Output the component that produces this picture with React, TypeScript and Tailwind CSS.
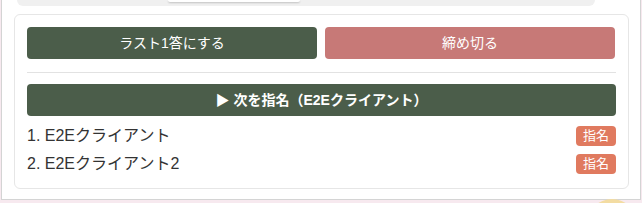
import React from "react";

const font = { fontFamily: '"Liberation Sans", "Noto Sans CJK JP", sans-serif' };

export default function App() {
  const players = ["E2Eクライアント", "E2Eクライアント2"];
  return (
    <div
      className="relative w-[642px] h-[203px] overflow-hidden bg-[#f7e9ef]"
      style={font}
    >
      <div className="ml-[1px] w-[640px] h-[200px] bg-white border-l border-r border-b border-[#d4d4d4] flex flex-col">
        <div className="ml-[15px] w-[578px] h-[6px] bg-[#f0f0f0] rounded-b-[14px] relative">
          <div className="absolute left-[151px] top-0 w-[132px] h-[2px] bg-white rounded-b-md shadow-[0_1px_2px_rgba(0,0,0,0.2)]" />
        </div>
        <div className="ml-[12px] mt-[8px] w-[615px] border border-[#e6e6e6] rounded-md px-[12px] pt-[12px] pb-[10px] flex flex-col">
          <div className="flex gap-2">
            <button className="w-[290px] h-8 rounded bg-[#4b5d4a] text-white text-[14px]">
              ラスト1答にする
            </button>
            <button className="w-[290px] h-8 rounded bg-[#c77977] text-white text-[14px]">
              締め切る
            </button>
          </div>
          <div className="mt-[13px] mb-[11px] border-t border-[#e2e2e2]" />
          <button className="h-8 rounded bg-[#4b5d4a] text-white text-[14px] font-bold">
            ▶ 次を指名（E2Eクライアント）
          </button>
          <div className="mt-[6px] flex flex-col">
            {players.map((p, i) => (
              <div key={p} className="h-[28px] flex items-center justify-between">
                <span className="text-[16px] text-[#333333]">
                  {i + 1}. {p}
                </span>
                <span className="w-10 h-5 rounded bg-[#e07a5f] text-white text-[13px] flex items-center justify-center">
                  指名
                </span>
              </div>
            ))}
          </div>
        </div>
      </div>
      <div className="absolute left-[587px] top-[199px] w-[50px] h-[50px] rounded-full bg-[#f3dca2]" />
    </div>
  );
}
